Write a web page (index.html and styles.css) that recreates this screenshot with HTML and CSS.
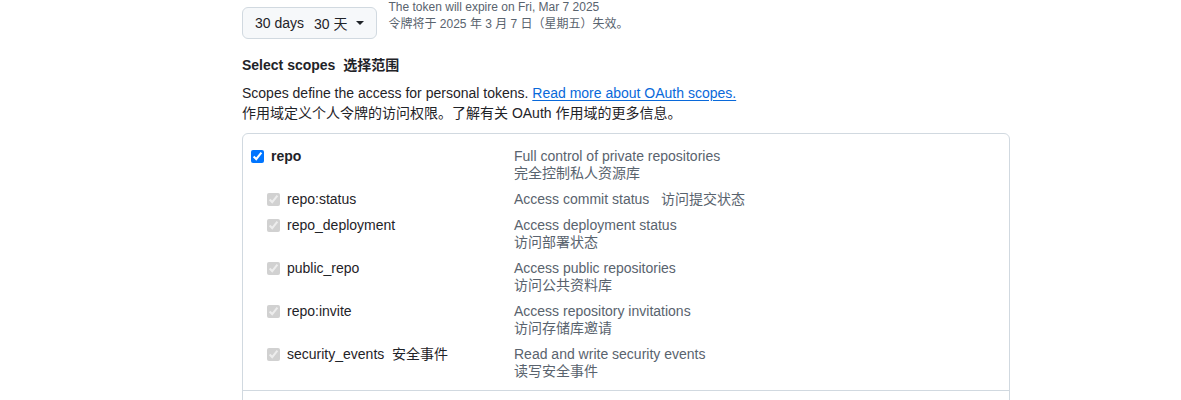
FILE: index.html
```html
<!DOCTYPE html>
<html lang="en">
<head>
<meta charset="utf-8">
<link rel="stylesheet" href="styles.css">
</head>
<body>
<div class="page">
  <div class="expire-row">
    <button class="select-btn" type="button">
      <span>30 days</span><span class="zh">30 天</span>
      <svg class="caret" width="8" height="4" viewBox="0 0 8 4"><path d="M0 0h8L4 4z" fill="#1f2328"/></svg>
    </button>
    <div class="note">
      <div>The token will expire on Fri, Mar 7 2025</div>
      <div>令牌将于 2025 年 3 月 7 日（星期五）失效。</div>
    </div>
  </div>

  <h3 class="scopes-title">Select scopes&nbsp; 选择范围</h3>
  <p class="scopes-desc">Scopes define the access for personal tokens. <a href="#" class="link">Read more about OAuth scopes.</a><br>作用域定义个人令牌的访问权限。了解有关 OAuth 作用域的更多信息。</p>

  <div class="scope-box">
    <div class="scope-group">
      <div class="scope-row main">
        <label class="scope-label"><input type="checkbox" checked><span class="name strong">repo</span></label>
        <div class="scope-text">Full control of private repositories<br>完全控制私人资源库</div>
      </div>
      <div class="scope-row sub">
        <label class="scope-label"><input type="checkbox" checked disabled><span class="name">repo:status</span></label>
        <div class="scope-text">Access commit status&nbsp;&nbsp; 访问提交状态</div>
      </div>
      <div class="scope-row sub">
        <label class="scope-label"><input type="checkbox" checked disabled><span class="name">repo_deployment</span></label>
        <div class="scope-text">Access deployment status<br>访问部署状态</div>
      </div>
      <div class="scope-row sub">
        <label class="scope-label"><input type="checkbox" checked disabled><span class="name">public_repo</span></label>
        <div class="scope-text">Access public repositories<br>访问公共资料库</div>
      </div>
      <div class="scope-row sub">
        <label class="scope-label"><input type="checkbox" checked disabled><span class="name">repo:invite</span></label>
        <div class="scope-text">Access repository invitations<br>访问存储库邀请</div>
      </div>
      <div class="scope-row sub">
        <label class="scope-label"><input type="checkbox" checked disabled><span class="name">security_events&nbsp; 安全事件</span></label>
        <div class="scope-text">Read and write security events<br>读写安全事件</div>
      </div>
    </div>
    <div class="scope-group next"></div>
  </div>
</div>
</body>
</html>
```

FILE: styles.css
```css
* { box-sizing: border-box; }
html, body {
  margin: 0;
  padding: 0;
  background: #ffffff;
}
body {
  font-family: "Liberation Sans", "Noto Sans CJK SC", sans-serif;
  color: #1f2328;
  font-size: 14px;
}
.page {
  margin-left: 242px;
  width: 768px;
  margin-top: -1px;
}
.expire-row {
  display: flex;
  align-items: flex-start;
  gap: 12px;
}
.select-btn {
  margin-top: 8px;
  height: 32px;
  padding: 0 12px;
  display: flex;
  align-items: center;
  gap: 8px;
  background: #f6f8fa;
  border: 1px solid #d1d9e0;
  border-radius: 6px;
  font: inherit;
  font-size: 14px;
  color: #1f2328;
  white-space: nowrap;
}
.select-btn .zh { margin-left: 2px; }
.note {
  font-size: 12px;
  line-height: 17px;
  color: #59636e;
}
.scopes-title {
  margin: 16px 0 0;
  font-size: 14px;
  font-weight: 700;
  line-height: 21px;
}
.scopes-desc {
  margin: 7px 0 0;
  line-height: 20px;
}
.link {
  color: #0969da;
  text-decoration: underline;
  text-underline-offset: 2px;
}
.scope-box {
  margin-top: 10px;
  border: 1px solid #d1d9e0;
  border-radius: 6px;
}
.scope-group {
  padding: 14px 8px 10px;
  border-bottom: 1px solid #d1d9e0;
  display: flex;
  flex-direction: column;
  gap: 9px;
}
.scope-group.next {
  height: 30px;
  border-bottom: none;
}
.scope-row {
  display: grid;
  grid-template-columns: 263px 1fr;
  font-size: 14px;
  line-height: 17px;
}
.scope-row.sub .scope-label { padding-left: 16px; }
.scope-label {
  display: flex;
  align-items: flex-start;
  gap: 7px;
  color: #1f2328;
}
.scope-label input {
  margin: 2px 0 0;
  width: 13px;
  height: 13px;
  flex: none;
}
.name.strong {
  font-weight: 700;
}
.scope-text {
  color: #59636e;
}
```
